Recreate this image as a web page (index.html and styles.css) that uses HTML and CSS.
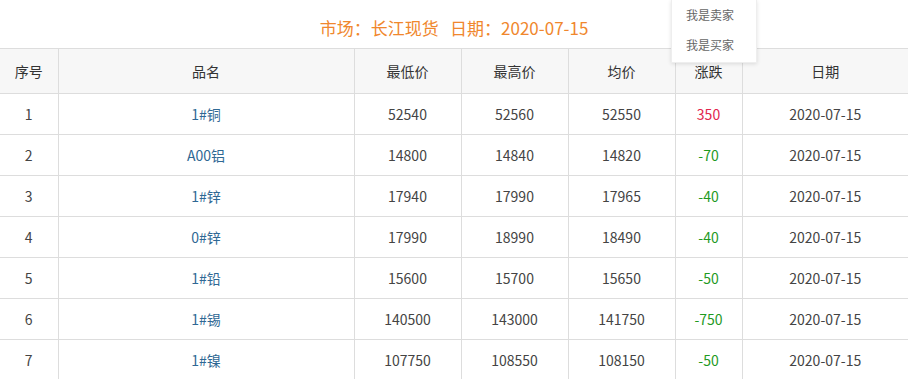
FILE: index.html
```html
<!DOCTYPE html>
<html lang="zh-CN">

<head>
    <meta charset="UTF-8">
    <meta name="viewport" content="width=device-width, initial-scale=1.0">
    <title>长江现货行情</title>
    <link rel="stylesheet" href="styles.css">
</head>

<body>
    <div class="market">
        <h3 class="title">市场：长江现货&nbsp;&nbsp;&nbsp;日期：2020-07-15</h3>

        <table class="price-table">
            <colgroup>
                <col class="c-no">
                <col class="c-name">
                <col class="c-num">
                <col class="c-num">
                <col class="c-num">
                <col class="c-chg">
                <col>
            </colgroup>
            <thead>
                <tr>
                    <th>序号</th>
                    <th>品名</th>
                    <th>最低价</th>
                    <th>最高价</th>
                    <th>均价</th>
                    <th>涨跌</th>
                    <th>日期</th>
                </tr>
            </thead>
            <tbody>
                <tr>
                    <td>1</td>
                    <td><a href="#">1#铜</a></td>
                    <td>52540</td>
                    <td>52560</td>
                    <td>52550</td>
                    <td class="up">350</td>
                    <td>2020-07-15</td>
                </tr>
                <tr>
                    <td>2</td>
                    <td><a href="#">A00铝</a></td>
                    <td>14800</td>
                    <td>14840</td>
                    <td>14820</td>
                    <td class="down">-70</td>
                    <td>2020-07-15</td>
                </tr>
                <tr>
                    <td>3</td>
                    <td><a href="#">1#锌</a></td>
                    <td>17940</td>
                    <td>17990</td>
                    <td>17965</td>
                    <td class="down">-40</td>
                    <td>2020-07-15</td>
                </tr>
                <tr>
                    <td>4</td>
                    <td><a href="#">0#锌</a></td>
                    <td>17990</td>
                    <td>18990</td>
                    <td>18490</td>
                    <td class="down">-40</td>
                    <td>2020-07-15</td>
                </tr>
                <tr>
                    <td>5</td>
                    <td><a href="#">1#铅</a></td>
                    <td>15600</td>
                    <td>15700</td>
                    <td>15650</td>
                    <td class="down">-50</td>
                    <td>2020-07-15</td>
                </tr>
                <tr>
                    <td>6</td>
                    <td><a href="#">1#锡</a></td>
                    <td>140500</td>
                    <td>143000</td>
                    <td>141750</td>
                    <td class="down">-750</td>
                    <td>2020-07-15</td>
                </tr>
                <tr>
                    <td>7</td>
                    <td><a href="#">1#镍</a></td>
                    <td>107750</td>
                    <td>108550</td>
                    <td>108150</td>
                    <td class="down">-50</td>
                    <td>2020-07-15</td>
                </tr>
            </tbody>
        </table>

        <!-- 用户菜单 -->
        <ul class="user-menu">
            <li><a href="#">我是卖家</a></li>
            <li><a href="#">我是买家</a></li>
        </ul>
    </div>
</body>

</html>
```

FILE: styles.css
```css
* {
    margin: 0;
    padding: 0;
    box-sizing: border-box;
    font-family: "Noto Sans CJK SC", "Noto Sans", sans-serif;
}

body {
    background: white;
    color: #444;
}

.market {
    position: relative;
    width: 908px;
}

.title {
    height: 48px;
    padding-top: 8px;
    line-height: 40px;
    text-align: center;
    font-size: 17px;
    font-weight: normal;
    color: #f0872d;
}

.price-table {
    width: 100%;
    border-collapse: collapse;
    table-layout: fixed;
    font-size: 14px;
}

.c-no {
    width: 58px;
}

.c-name {
    width: 296px;
}

.c-num {
    width: 107px;
}

.c-chg {
    width: 67px;
}

.price-table th,
.price-table td {
    border: 1px solid #ddd;
    text-align: center;
}

.price-table tr > :first-child {
    border-left: none;
}

.price-table tr > :last-child {
    border-right: none;
}

.price-table th {
    height: 45px;
    background: #f7f7f7;
    font-weight: normal;
    color: #333;
}

.price-table td {
    height: 41px;
}

.price-table a {
    color: #2f6894;
    text-decoration: none;
}

.up {
    color: #e2264d;
}

.down {
    color: #1f9a1f;
}

.user-menu {
    position: absolute;
    top: 0;
    left: 671px;
    width: 86px;
    height: 63px;
    list-style: none;
    background: white;
    border: 1px solid #eee;
    border-top: none;
    box-shadow: 0 1px 4px rgba(0, 0, 0, 0.12);
}

.user-menu li {
    height: 30px;
    line-height: 26px;
    padding-left: 14px;
}

.user-menu a {
    font-size: 12px;
    color: #666;
    text-decoration: none;
}
```
